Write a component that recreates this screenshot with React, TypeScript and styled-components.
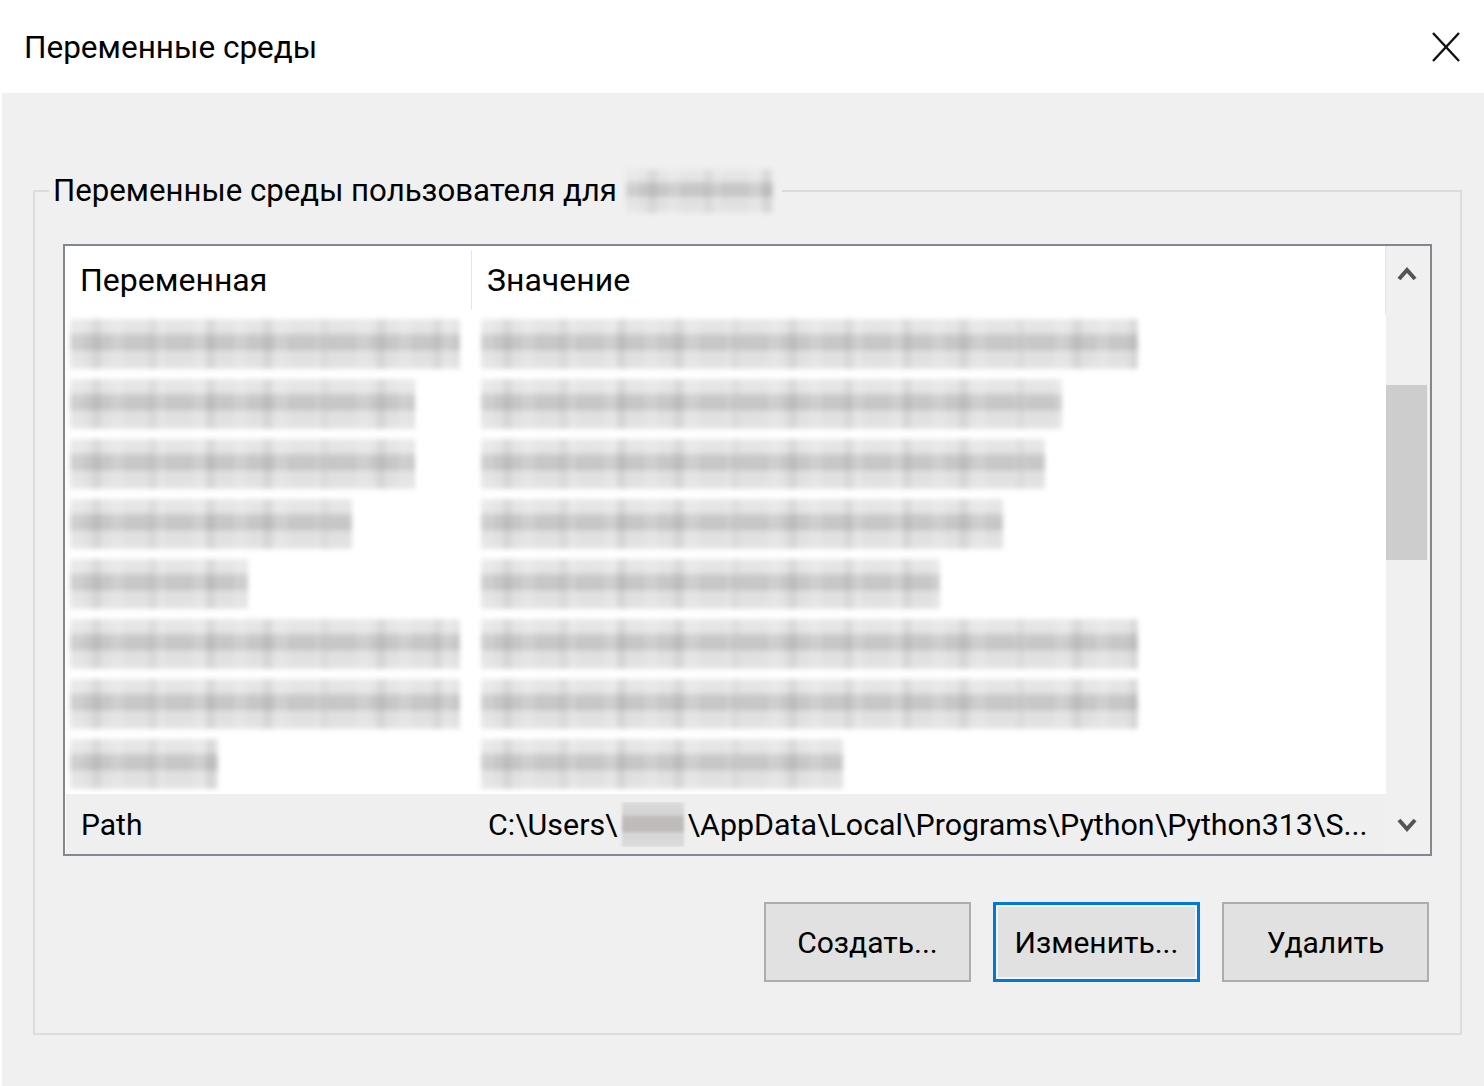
import React from "react";
import styled, { createGlobalStyle } from "styled-components";

const GlobalStyle = createGlobalStyle`
  html, body { margin: 0; padding: 0; background: #ffffff; }
  body { font-family: Roboto, "Noto Sans", sans-serif; color: #000; }
  * { box-sizing: border-box; }
`;

const Window = styled.div`
  width: 1484px;
  height: 1086px;
  display: flex;
  flex-direction: column;
  background: #ffffff;
`;

const TitleBar = styled.div`
  height: 93px;
  flex: none;
  display: flex;
  align-items: center;
  justify-content: space-between;
  padding: 0 23px 0 24px;
  background: #ffffff;
`;

const Title = styled.div`
  font-size: 31.5px;
  line-height: 40px;
  margin-top: 2px;
  color: #000;
`;

const CloseButton = styled.div`
  width: 30px;
  height: 32px;
  display: flex;
  align-items: center;
  justify-content: center;
`;

const Body = styled.div`
  flex: 1;
  background: #f0f0f0;
  margin-left: 2px;
  padding: 76px 22px 51px 31px;
  display: flex;
`;

const Group = styled.fieldset`
  flex: 1;
  margin: 0;
  border: 2px solid #dcdcdc;
  padding: 31px 28px 49px 28px;
  display: flex;
  flex-direction: column;
  min-width: 0;
`;

const Legend = styled.legend`
  margin-left: -14px;
  padding: 0 9px 0 4px;
  font-size: 31.2px;
  line-height: 44px;
  display: flex;
  align-items: center;
  gap: 9px;
`;

const Redacted = styled.span<{ $w: number; $h: number }>`
  display: inline-block;
  flex: none;
  width: ${(p) => p.$w}px;
  height: ${(p) => p.$h}px;
  vertical-align: middle;
  background:
    repeating-linear-gradient(90deg, rgba(255,255,255,0.14) 0 13px, transparent 13px 41px),
    repeating-linear-gradient(90deg, transparent 0 22px, rgba(0,0,0,0.05) 22px 31px, transparent 31px 57px),
    linear-gradient(180deg, #e8e8e8 0%, #e2e2e2 30%, #cacaca 31%, #c4c4c4 62%, #dedede 63%, #e4e4e4 100%);
  filter: blur(2.5px);
`;

const PathRedacted = styled.span`
  display: inline-block;
  flex: none;
  width: 62px;
  height: 45px;
  background: linear-gradient(180deg, #dcdcdc 0%, #d2d2d2 30%, #c0bcbb 31%, #bdbab9 66%, #d6d6d6 67%, #dadada 100%);
  filter: blur(1.5px);
`;

const ListBox = styled.div`
  height: 612px;
  border: 2px solid #828790;
  background: #ffffff;
  display: flex;
`;

const ListMain = styled.div`
  flex: 1;
  display: flex;
  flex-direction: column;
  min-width: 0;
`;

const HeaderRow = styled.div`
  height: 68px;
  display: grid;
  grid-template-columns: 407px 1fr;
  align-items: center;
  border-right: 1px solid #e5e5e5;
`;

const HeaderCell = styled.div<{ $divider?: boolean }>`
  height: 60px;
  display: flex;
  align-items: center;
  padding-left: 15px;
  font-size: 32px;
  color: #000;
  border-right: ${(p) => (p.$divider ? "1px solid #e5e5e5" : "none")};
`;

const Row = styled.div<{ $selected?: boolean }>`
  height: 60px;
  display: grid;
  grid-template-columns: 407px 1fr;
  align-items: center;
  background: ${(p) => (p.$selected ? "#efefef" : "transparent")};
  margin-left: ${(p) => (p.$selected ? "1px" : "0")};
`;

const BlurCell = styled.div<{ $pad: number }>`
  padding-left: ${(p) => p.$pad}px;
  display: flex;
  align-items: center;
`;

const TextCell = styled.div<{ $size: number }>`
  padding-left: 15px;
  font-size: ${(p) => p.$size}px;
  white-space: nowrap;
  overflow: hidden;
  display: flex;
  align-items: center;
  gap: 4px;
`;

const ScrollBar = styled.div`
  width: 44px;
  flex: none;
  background: #f0f0f0;
  display: flex;
  flex-direction: column;
  padding-right: 3px;
`;

const ArrowButton = styled.div<{ $h: number }>`
  height: ${(p) => p.$h}px;
  display: flex;
  align-items: center;
  justify-content: center;
  flex: none;
`;

const Track = styled.div`
  flex: 1;
  display: flex;
  flex-direction: column;
`;

const Thumb = styled.div<{ $offset: number; $size: number }>`
  margin-top: ${(p) => p.$offset}px;
  height: ${(p) => p.$size}px;
  background: #cdcdcd;
`;

const ButtonRow = styled.div`
  display: flex;
  justify-content: flex-end;
  gap: 22px;
  margin-top: 46px;
  padding-right: 3px;
`;

const Button = styled.div<{ $focused?: boolean }>`
  width: 207px;
  height: 80px;
  background: #e1e1e1;
  border: ${(p) => (p.$focused ? "3px solid #0078d7" : "2px solid #adadad")};
  box-shadow: ${(p) => (p.$focused ? "inset 0 0 0 2px #f4f4f4" : "none")};
  display: flex;
  align-items: center;
  justify-content: center;
  font-size: 30px;
  color: #000;
`;

const Chevron = ({ up }: { up?: boolean }) => (
  <svg width="22" height="18" viewBox="0 0 22 18">
    <polyline
      points={up ? "3,14 11,5 19,14" : "3,4 11,13 19,4"}
      fill="none"
      stroke="#555555"
      strokeWidth="4"
      strokeLinejoin="miter"
    />
  </svg>
);

const rows = [
  { name: 390, value: 657 },
  { name: 345, value: 581 },
  { name: 345, value: 564 },
  { name: 282, value: 522 },
  { name: 178, value: 459 },
  { name: 390, value: 657 },
  { name: 390, value: 657 },
  { name: 148, value: 362 },
];

export default function App() {
  return (
    <>
      <GlobalStyle />
      <Window>
        <TitleBar>
          <Title>Переменные среды</Title>
          <CloseButton>
            <svg width="30" height="32" viewBox="0 0 30 32">
              <line x1="2" y1="2" x2="28" y2="30" stroke="#111" strokeWidth="2.4" />
              <line x1="28" y1="2" x2="2" y2="30" stroke="#111" strokeWidth="2.4" />
            </svg>
          </CloseButton>
        </TitleBar>
        <Body>
          <Group>
            <Legend>
              Переменные среды пользователя для
              <Redacted $w={147} $h={44} />
            </Legend>
            <ListBox>
              <ListMain>
                <HeaderRow>
                  <HeaderCell $divider>Переменная</HeaderCell>
                  <HeaderCell>Значение</HeaderCell>
                </HeaderRow>
                {rows.map((r, i) => (
                  <Row key={i}>
                    <BlurCell $pad={5}>
                      <Redacted $w={r.name} $h={50} />
                    </BlurCell>
                    <BlurCell $pad={9}>
                      <Redacted $w={r.value} $h={50} />
                    </BlurCell>
                  </Row>
                ))}
                <Row $selected>
                  <TextCell $size={30}>Path</TextCell>
                  <TextCell $size={30.4}>
                    C:\Users\
                    <PathRedacted />
                    \AppData\Local\Programs\Python\Python313\S...
                  </TextCell>
                </Row>
              </ListMain>
              <ScrollBar>
                <ArrowButton $h={56}>
                  <Chevron up />
                </ArrowButton>
                <Track>
                  <Thumb $offset={83} $size={175} />
                </Track>
                <ArrowButton $h={58}>
                  <Chevron />
                </ArrowButton>
              </ScrollBar>
            </ListBox>
            <ButtonRow>
              <Button>Создать...</Button>
              <Button $focused>Изменить...</Button>
              <Button>Удалить</Button>
            </ButtonRow>
          </Group>
        </Body>
      </Window>
    </>
  );
}
